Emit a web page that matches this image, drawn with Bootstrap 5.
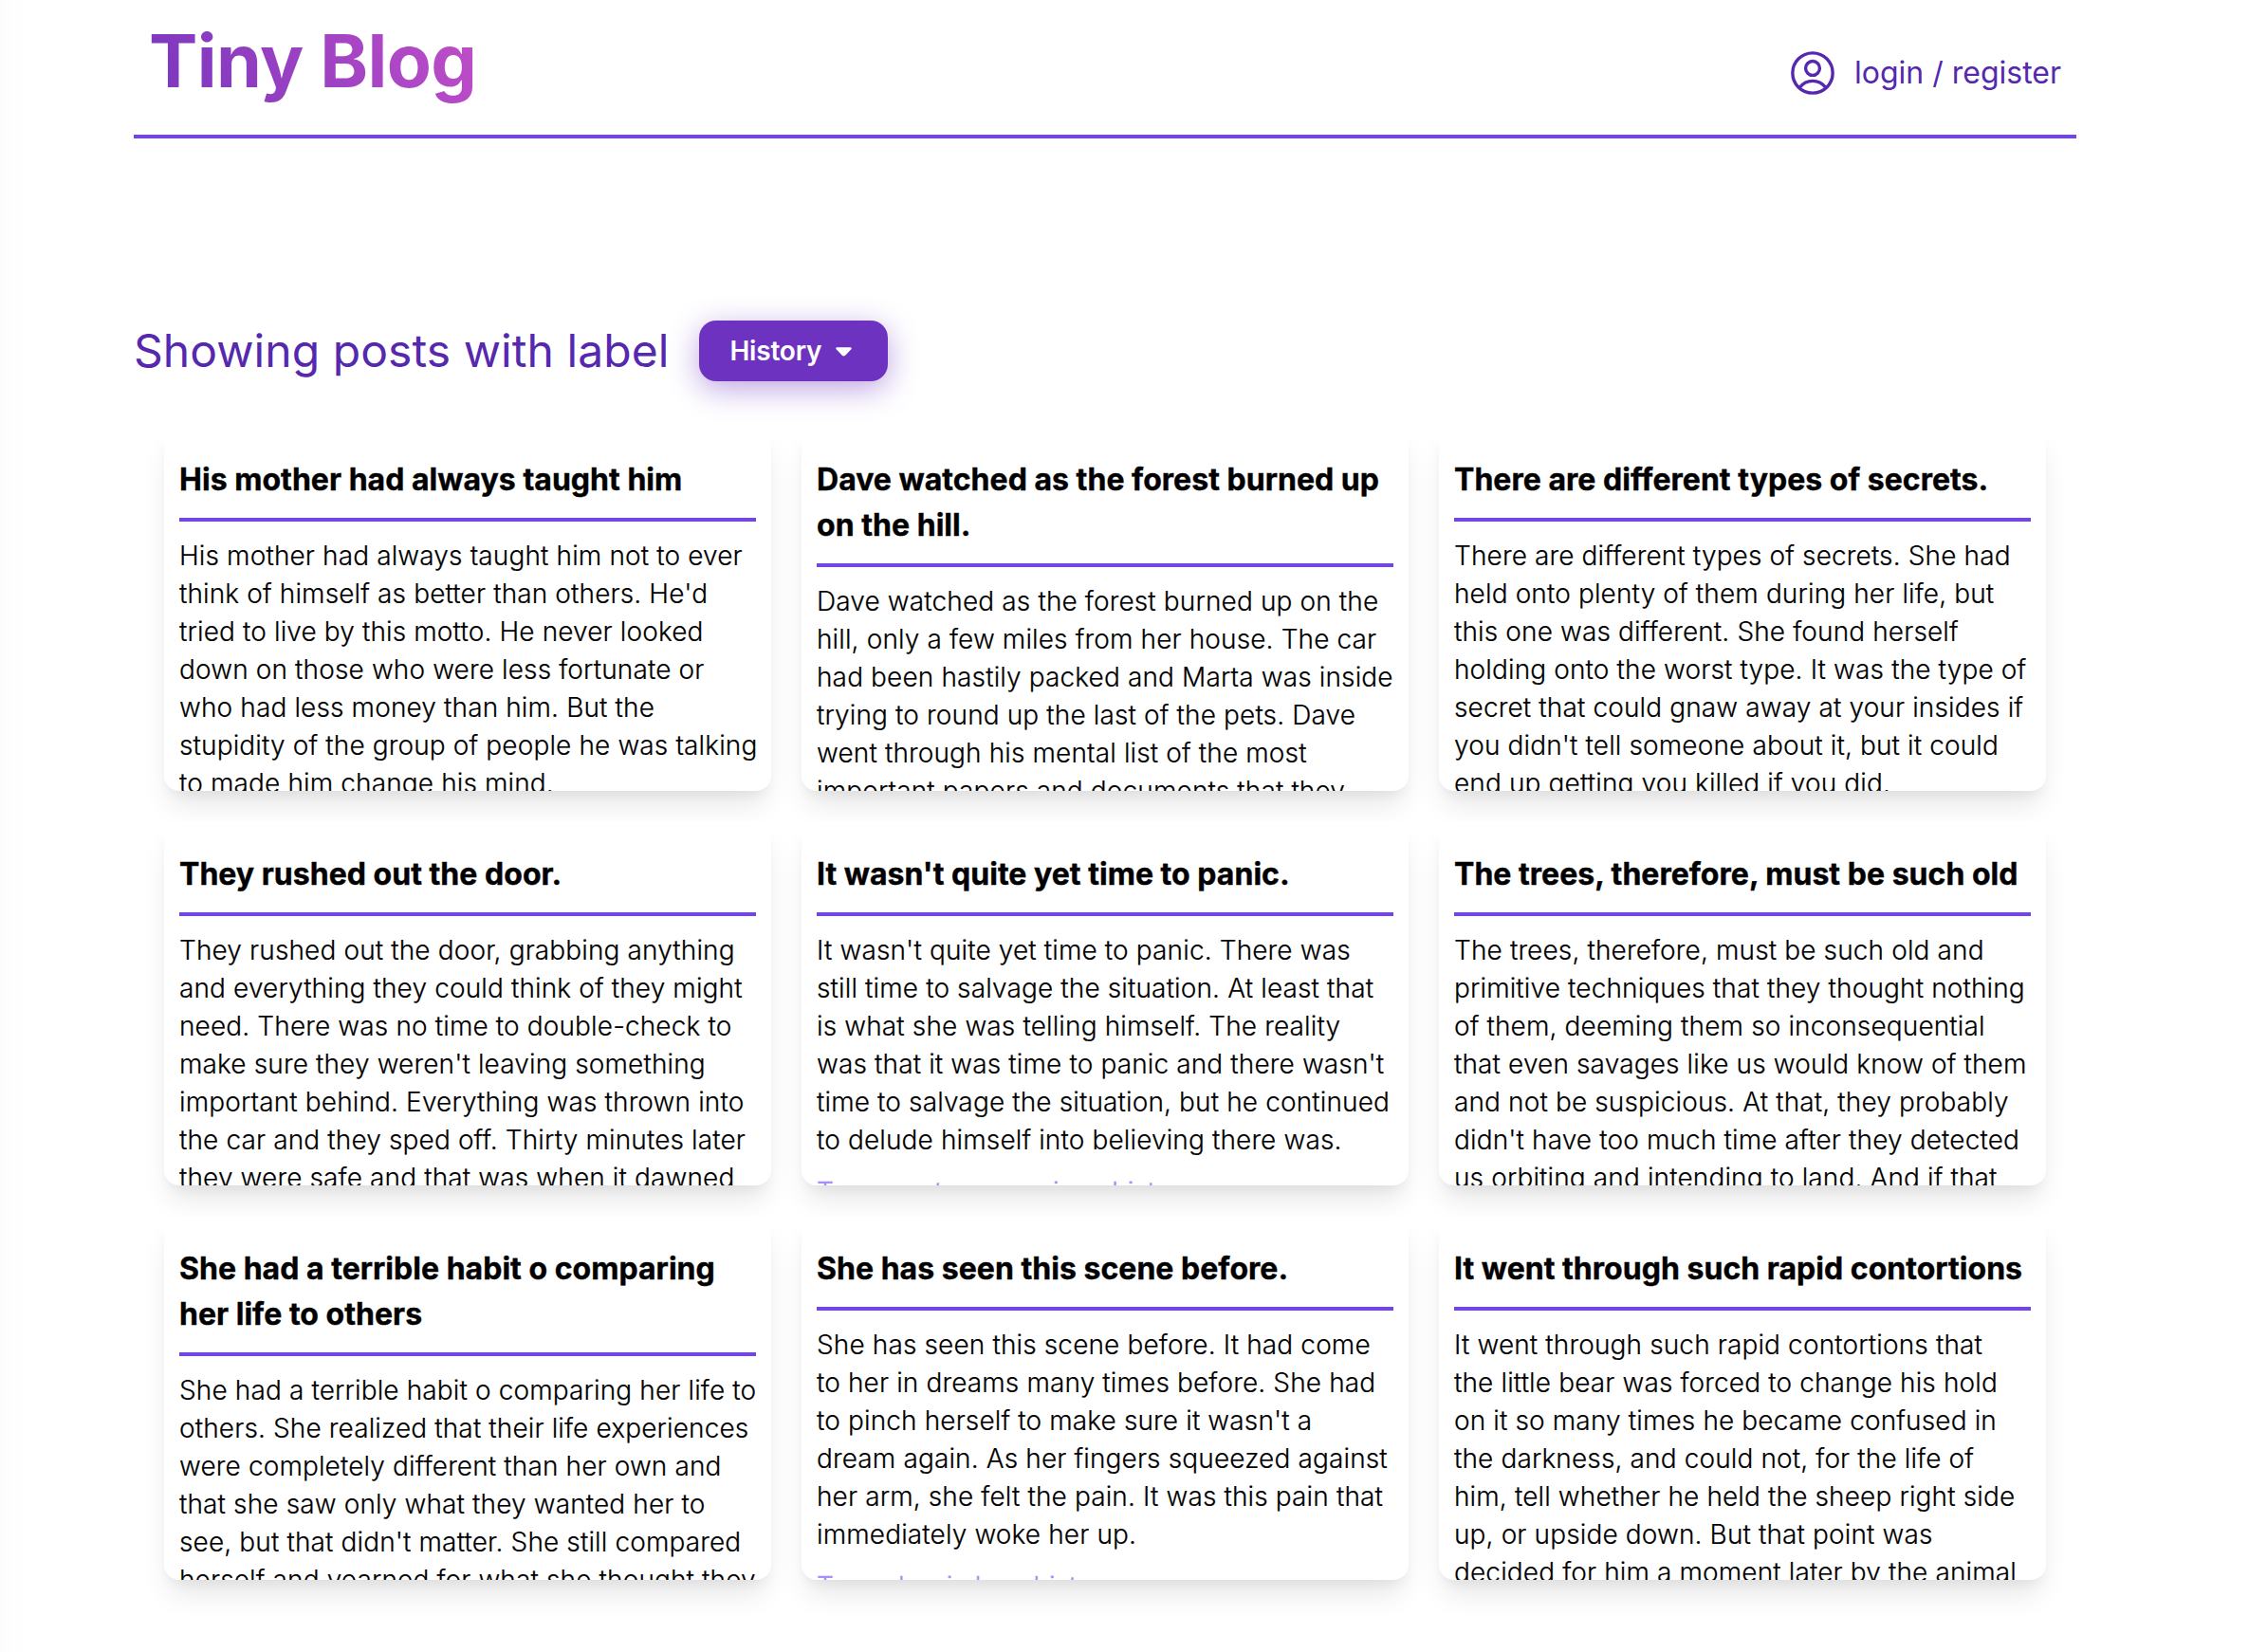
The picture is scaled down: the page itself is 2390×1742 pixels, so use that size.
<!DOCTYPE html>
<html lang="en">
<head>
<meta charset="utf-8">
<meta name="viewport" content="width=device-width, initial-scale=1">
<title>Tiny Blog</title>
<link rel="stylesheet" href="https://cdn.jsdelivr.net/npm/bootstrap@5.3.0/dist/css/bootstrap.min.css">
<style>
  body { font-family: Inter, "Liberation Sans", sans-serif; color: #000; background: linear-gradient(90deg, #fcfcfc, #fefefe 12px, #fff 30px); height: 1742px; overflow: hidden; }
  .page-wrap { width: 2048px; margin-left: 141px; }
  .site-head { height: 146px; border-bottom: 4px solid #7445e4; padding: 0 16px; }
  .brand-name { font-size: 77px; line-height: 96px; font-weight: 700; padding-top: 16px; }
  .brand-name span { display: inline-block; letter-spacing: -.65px; background: linear-gradient(60deg, #7836be, #c24ec8); -webkit-background-clip: text; background-clip: text; color: transparent; }
  .login-link { color: #5628ae; font-size: 32px; line-height: 48px; padding-top: 12px; gap: 17px; }
  .login-link svg { width: 54px; height: 54px; }
  .label-row { margin-top: 192px; height: 64px; gap: 32px; color: #5628ae; font-size: 48px; line-height: 64px; letter-spacing: .06px; }
  .label-btn { width: 199px; height: 64px; border-radius: 18px; background: #6d33c0; color: #fff; font-size: 28px; font-weight: 600; line-height: 64px; padding: 0 0 0 32px; gap: 15px; letter-spacing: -.2px; box-shadow: 0 8px 32px rgba(109,51,192,.45); }
  .label-btn:hover { background: #6d33c0; color: #fff; }
  .label-btn svg { width: 17px; height: 10px; margin-top: 2px; }
  .post-grid { display: grid; grid-template-columns: repeat(3, 640px); gap: 32px; padding: 48px 32px 0; }
  .post { height: 384px; overflow: hidden; border-radius: 16px; background: #fff; padding: 32px 16px 0; box-shadow: 0 20px 30px -6px rgba(0,0,0,.1), 0 8px 12px -4px rgba(0,0,0,.05); }
  .post h2 { font-size: 32px; line-height: 48px; font-weight: 700; letter-spacing: .03px; -webkit-text-stroke: .4px #000; margin: 0; padding-bottom: 16px; border-bottom: 4px solid #7445e4; }
  .post p { font-size: 28px; line-height: 40px; font-weight: 300; letter-spacing: .13px; -webkit-text-stroke: .2px currentColor; margin: 16px 0 0; white-space: nowrap; }
  .post p.post-tags { color: #a78bfa; letter-spacing: 0; margin-top: 15px; -webkit-text-stroke-width: .4px; }
</style>
<script src="https://cdn.jsdelivr.net/npm/bootstrap@5.3.0/dist/js/bootstrap.bundle.min.js"></script>
</head>
<body>
<div class="page-wrap">
  <header class="site-head d-flex justify-content-between">
    <h1 class="brand-name m-0"><span>Tiny Blog</span></h1>
    <a href="#" class="login-link d-flex align-items-center text-decoration-none">
      <svg viewBox="0 0 24 24" fill="none" stroke="currentColor" stroke-width="1.5" stroke-linecap="round" stroke-linejoin="round"><circle cx="12" cy="12" r="9.4"/><circle cx="12" cy="9.75" r="3.300"/><path d="M6 18.700a7.500 7.500 0 0 1 12 0"/></svg>
      <span>login / register</span>
    </a>
  </header>
  <main>
    <div class="label-row d-flex align-items-center">
      <span>Showing posts with label</span>
      <button type="button" class="label-btn btn border-0 d-flex align-items-center"><span>History</span><svg viewBox="0 0 18 10"><path fill="currentColor" d="M1.500 0h15q2 .4.8 2l-6.500 7q-1.800 1.600-3.600 0L.7 2Q-.5.4 1.500 0z"/></svg></button>
    </div>
    <div class="post-grid">
      <article class="post"><h2>His mother had always taught him</h2>
        <p>His mother had always taught him not to ever<br>think of himself as better than others. He'd<br>tried to live by this motto. He never looked<br>down on those who were less fortunate or<br>who had less money than him. But the<br>stupidity of the group of people he was talking<br>to made him change his mind.</p></article>
      <article class="post"><h2>Dave watched as the forest burned up on the hill.</h2>
        <p>Dave watched as the forest burned up on the<br>hill, only a few miles from her house. The car<br>had been hastily packed and Marta was inside<br>trying to round up the last of the pets. Dave<br>went through his mental list of the most<br>important papers and documents that they</p></article>
      <article class="post"><h2>There are different types of secrets.</h2>
        <p>There are different types of secrets. She had<br>held onto plenty of them during her life, but<br>this one was different. She found herself<br>holding onto the worst type. It was the type of<br>secret that could gnaw away at your insides if<br>you didn't tell someone about it, but it could<br>end up getting you killed if you did.</p></article>
      <article class="post"><h2>They rushed out the door.</h2>
        <p>They rushed out the door, grabbing anything<br>and everything they could think of they might<br>need. There was no time to double-check to<br>make sure they weren't leaving something<br>important behind. Everything was thrown into<br>the car and they sped off. Thirty minutes later<br>they were safe and that was when it dawned</p></article>
      <article class="post"><h2>It wasn't quite yet time to panic.</h2>
        <p>It wasn't quite yet time to panic. There was<br>still time to salvage the situation. At least that<br>is what she was telling himself. The reality<br>was that it was time to panic and there wasn't<br>time to salvage the situation, but he continued<br>to delude himself into believing there was.</p>
        <p class="post-tags">Tags mystery american history</p></article>
      <article class="post"><h2>The trees, therefore, must be such old</h2>
        <p>The trees, therefore, must be such old and<br>primitive techniques that they thought nothing<br>of them, deeming them so inconsequential<br>that even savages like us would know of them<br>and not be suspicious. At that, they probably<br>didn't have too much time after they detected<br>us orbiting and intending to land. And if that</p></article>
      <article class="post"><h2>She had a terrible habit o comparing her life to others</h2>
        <p>She had a terrible habit o comparing her life to<br>others. She realized that their life experiences<br>were completely different than her own and<br>that she saw only what they wanted her to<br>see, but that didn't matter. She still compared<br>herself and yearned for what she thought they</p></article>
      <article class="post"><h2>She has seen this scene before.</h2>
        <p>She has seen this scene before. It had come<br>to her in dreams many times before. She had<br>to pinch herself to make sure it wasn't a<br>dream again. As her fingers squeezed against<br>her arm, she felt the pain. It was this pain that<br>immediately woke her up.</p>
        <p class="post-tags">Tags classic love history</p></article>
      <article class="post"><h2>It went through such rapid contortions</h2>
        <p>It went through such rapid contortions that<br>the little bear was forced to change his hold<br>on it so many times he became confused in<br>the darkness, and could not, for the life of<br>him, tell whether he held the sheep right side<br>up, or upside down. But that point was<br>decided for him a moment later by the animal</p></article>
    </div>
  </main>
</div>
</body>
</html>
